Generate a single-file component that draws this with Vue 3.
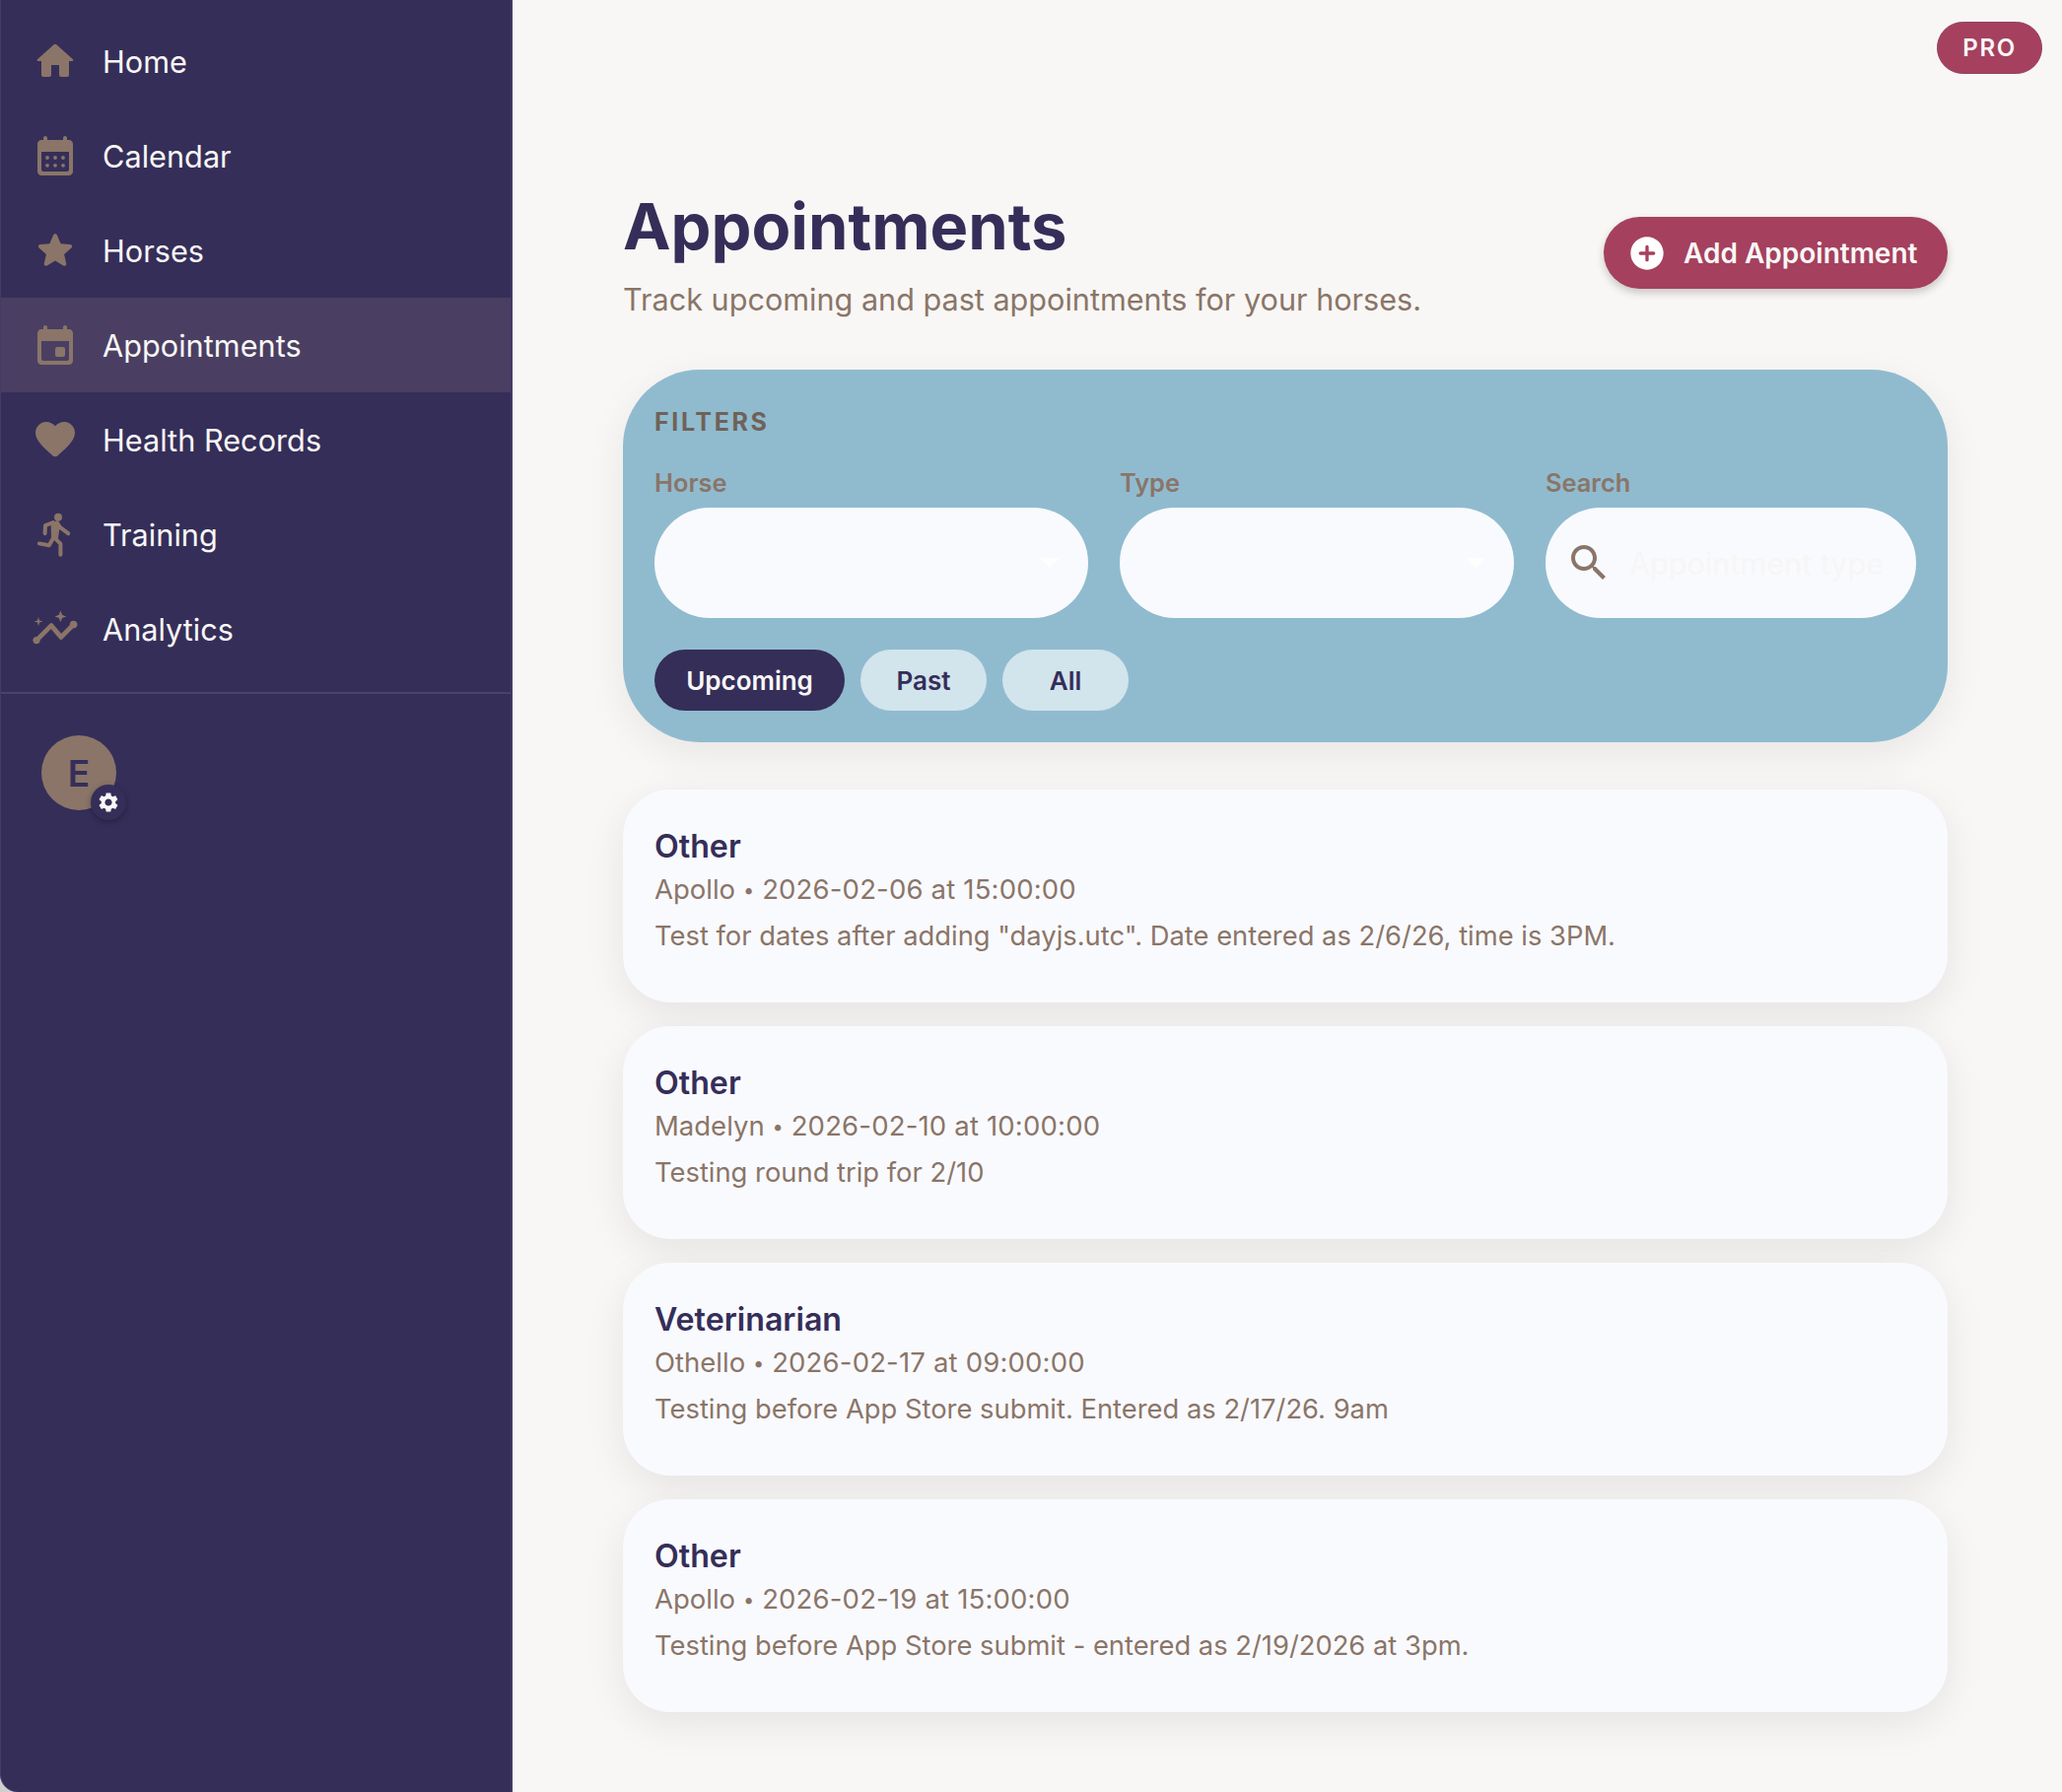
<script setup>
const shell = 'M16 3v1H8V3c0-.55-.45-1-1-1s-1 .45-1 1v1H5c-1.11 0-1.99.9-1.99 2L3 20c0 1.1.89 2 2 2h14c1.1 0 2-.9 2-2V6c0-1.1-.9-2-2-2h-1V3c0-.55-.45-1-1-1s-1 .45-1 1zm2 17H6c-.55 0-1-.45-1-1V10h14v9c0 .55-.45 1-1 1z'
const nav = [
  { label: 'Home', icon: 'home' },
  { label: 'Calendar', icon: 'calendar' },
  { label: 'Horses', icon: 'star' },
  { label: 'Appointments', icon: 'event', active: true },
  { label: 'Health Records', icon: 'heart' },
  { label: 'Training', icon: 'run' },
  { label: 'Analytics', icon: 'graph' }
]
const paths = {
  home: 'M10 19v-5h4v5c0 .55.45 1 1 1h3c.55 0 1-.45 1-1v-7h1.7c.46 0 .68-.57.33-.87L12.67 3.6c-.38-.34-.96-.34-1.34 0l-8.36 7.53c-.34.3-.13.87.33.87H5v7c0 .55.45 1 1 1h3c.55 0 1-.45 1-1z',
  star: 'M12 17.27l4.15 2.51c.76.46 1.69-.22 1.49-1.08l-1.1-4.72 3.67-3.18c.67-.58.31-1.68-.57-1.75l-4.83-.41-1.89-4.46c-.34-.81-1.5-.81-1.84 0L9.19 8.63l-4.83.41c-.88.07-1.24 1.17-.57 1.75l3.67 3.18-1.1 4.72c-.2.86.73 1.54 1.49 1.08l4.15-2.5z',
  heart: 'M13.35 20.13c-.76.69-1.93.69-2.69-.01l-.11-.1C5.3 15.27 1.87 12.16 2 8.28c.06-1.7.93-3.33 2.34-4.29 2.64-1.8 5.9-.96 7.66 1.1 1.76-2.06 5.02-2.91 7.66-1.1 1.41.96 2.28 2.59 2.34 4.29.14 3.88-3.3 6.99-8.55 11.76l-.1.09z'
}
const cards = [
  { title: 'Other', horse: 'Apollo', when: '2026-02-06 at 15:00:00', note: 'Test for dates after adding "dayjs.utc". Date entered as 2/6/26, time is 3PM.' },
  { title: 'Other', horse: 'Madelyn', when: '2026-02-10 at 10:00:00', note: 'Testing round trip for 2/10' },
  { title: 'Veterinarian', horse: 'Othello', when: '2026-02-17 at 09:00:00', note: 'Testing before App Store submit. Entered as 2/17/26. 9am' },
  { title: 'Other', horse: 'Apollo', when: '2026-02-19 at 15:00:00', note: 'Testing before App Store submit - entered as 2/19/2026 at 3pm.' }
]
</script>

<template>
  <div class="app">
    <aside class="sidebar">
      <nav class="nav">
        <a v-for="item in nav" :key="item.label" class="nav-item" :class="{ active: item.active }">
          <svg class="nav-icon" viewBox="0 0 24 24">
            <path v-if="paths[item.icon]" :d="paths[item.icon]" />
            <template v-else-if="item.icon === 'calendar'">
              <path :d="shell" />
              <circle v-for="x in [8, 12, 16]" :key="'a' + x" :cx="x" cy="13" r="0.95" />
              <circle v-for="x in [8, 12, 16]" :key="'b' + x" :cx="x" cy="16.9" r="0.95" />
            </template>
            <template v-else-if="item.icon === 'event'">
              <path :d="shell" />
              <rect x="12" y="13" width="5" height="5" rx="1" />
            </template>
            <template v-else-if="item.icon === 'run'">
              <circle cx="13.5" cy="3.4" r="2" />
              <path d="M10.2 6.4 13 5.7 13.9 8.5 13 14.6 10.4 14.2z" class="run-body" />
              <path class="line thin" d="M6.8 11.6 7 7.6 11 6M13 6.2 14.4 8.4 18.6 11.6M11.2 13.6 8.9 17.6 3.9 16.7M12 14.2 14.7 16.8 14.7 22.4" />
            </template>
            <template v-else>
              <path class="line" d="M2.5 17.8 10 10.3 15 16.2 21.3 9.8" />
              <circle cx="2.5" cy="17.8" r="1.8" />
              <circle cx="21.3" cy="9.8" r="1.9" />
              <path d="M14.7 2.8l.8 2.1 2.1.8-2.1.8-.8 2.1-.8-2.1-2.1-.8 2.1-.8z" />
              <path d="M3.5 6l.5 1.8 1.8.5-1.8.5-.5 1.8-.5-1.8-1.8-.5 1.8-.5z" />
            </template>
          </svg>
          <span>{{ item.label }}</span>
        </a>
      </nav>
      <div class="account">
        <div class="avatar">
          E
          <span class="gear">
            <svg viewBox="0 0 24 24"><path d="M19.14 12.94c.04-.3.06-.61.06-.94 0-.32-.02-.64-.07-.94l2.03-1.58c.18-.14.23-.41.12-.61l-1.92-3.32c-.12-.22-.37-.29-.59-.22l-2.39.96c-.5-.38-1.03-.7-1.62-.94l-.36-2.54c-.04-.24-.24-.41-.48-.41h-3.84c-.24 0-.43.17-.47.41l-.36 2.54c-.59.24-1.13.57-1.62.94l-2.39-.96c-.22-.08-.47 0-.59.22L2.74 8.87c-.12.21-.08.47.12.61l2.03 1.58c-.05.3-.09.63-.09.94s.02.64.07.94l-2.03 1.58c-.18.14-.23.41-.12.61l1.92 3.32c.12.22.37.29.59.22l2.39-.96c.5.38 1.03.7 1.62.94l.36 2.54c.05.24.24.41.48.41h3.84c.24 0 .44-.17.47-.41l.36-2.54c.59-.24 1.13-.56 1.62-.94l2.39.96c.22.08.47 0 .59-.22l1.92-3.32c.12-.22.07-.47-.12-.61l-2.01-1.58zM12 15.6c-1.98 0-3.6-1.62-3.6-3.6s1.62-3.6 3.6-3.6 3.6 1.62 3.6 3.6-1.62 3.6-3.6 3.6z" /></svg>
          </span>
        </div>
      </div>
    </aside>

    <main class="main">
      <span class="pro">PRO</span>
      <header class="head">
        <div>
          <h1>Appointments</h1>
          <p>Track upcoming and past appointments for your horses.</p>
        </div>
        <button class="add">
          <svg viewBox="0 0 24 24"><path d="M12 2C6.48 2 2 6.48 2 12s4.48 10 10 10 10-4.48 10-10S17.52 2 12 2zm4 11h-3v3c0 .55-.45 1-1 1s-1-.45-1-1v-3H8c-.55 0-1-.45-1-1s.45-1 1-1h3V8c0-.55.45-1 1-1s1 .45 1 1v3h3c.55 0 1 .45 1 1s-.45 1-1 1z" /></svg>
          Add Appointment
        </button>
      </header>

      <section class="filters">
        <h2>FILTERS</h2>
        <div class="fields">
          <div class="field">
            <label>Horse</label>
            <div class="control"><i class="caret"></i></div>
          </div>
          <div class="field">
            <label>Type</label>
            <div class="control"><i class="caret"></i></div>
          </div>
          <div class="field">
            <label>Search</label>
            <div class="control search">
              <svg viewBox="0 0 24 24"><path d="M15.5 14h-.79l-.28-.27C15.41 12.59 16 11.11 16 9.5 16 5.91 13.09 3 9.5 3S3 5.91 3 9.5 5.91 16 9.5 16c1.61 0 3.09-.59 4.23-1.57l.27.28v.79l5 4.99L20.49 19l-4.99-5zm-6 0C7.01 14 5 11.99 5 9.5S7.01 5 9.5 5 14 7.01 14 9.5 11.99 14 9.5 14z" /></svg>
              <input placeholder="Appointment type" />
            </div>
          </div>
        </div>
        <div class="pills">
          <button class="pill on">Upcoming</button>
          <button class="pill past">Past</button>
          <button class="pill all">All</button>
        </div>
      </section>

      <article v-for="card in cards" :key="card.when" class="card">
        <h3>{{ card.title }}</h3>
        <div class="meta">{{ card.horse }}<span class="dot">•</span><span class="when">{{ card.when }}</span></div>
        <div class="note">{{ card.note }}</div>
      </article>
    </main>
  </div>
</template>

<style scoped>
.app {
  display: flex;
  min-height: 1818px;
  background: #cfcfd2;
  font-family: Inter, "Liberation Sans", sans-serif;
}
.sidebar {
  width: 520px;
  flex: none;
  box-sizing: border-box;
  background: #352e59;
  border-left: 1px solid #443b68;
  border-right: 2px solid #443b68;
  border-bottom-left-radius: 18px;
  padding-top: 14px;
}
.nav-item {
  display: flex;
  align-items: center;
  height: 96px;
  padding-left: 31px;
  gap: 24px;
  color: #f8f7f5;
  font-size: 30.7px;
}
.nav-item.active {
  background: #4a3f62;
}
.nav-icon {
  width: 48px;
  height: 48px;
  fill: #8a7568;
  flex: none;
}
.line {
  fill: none;
  stroke: #8a7568;
  stroke-width: 2.4;
  stroke-linecap: round;
  stroke-linejoin: round;
}
.line.thin {
  stroke-width: 2;
}
.run-body {
  stroke: #8a7568;
  stroke-width: 0.8;
  stroke-linejoin: round;
}
.account {
  margin-top: 16px;
  border-top: 2px solid #4a416e;
  padding: 42px 0 0 41px;
}
.avatar {
  position: relative;
  width: 76px;
  height: 76px;
  border-radius: 50%;
  background: #8a7568;
  color: #352e59;
  font-size: 37px;
  font-weight: 600;
  line-height: 78px;
  text-align: center;
}
.gear {
  position: absolute;
  right: -10px;
  bottom: -10px;
  width: 36px;
  height: 36px;
  border-radius: 50%;
  background: #352e59;
  box-shadow: 0 2px 6px rgba(0, 0, 0, 0.3);
  display: flex;
  align-items: center;
  justify-content: center;
}
.gear svg {
  width: 24px;
  height: 24px;
  fill: #f8f7f5;
}
.main {
  position: relative;
  flex: 1;
  min-width: 0;
  background: #f8f7f5;
  padding: 191px 116px 0 112px;
}
.pro {
  position: absolute;
  top: 22px;
  right: 20px;
  width: 107px;
  height: 53px;
  box-sizing: border-box;
  border: 1px solid #94406a;
  border-radius: 27px;
  background: #a5405e;
  color: #f8f7f5;
  font-size: 24px;
  font-weight: 600;
  letter-spacing: 1.6px;
  line-height: 51px;
  text-align: center;
}
.head {
  display: flex;
  justify-content: space-between;
  align-items: center;
  margin-bottom: 50px;
}
h1 {
  margin: 0;
  color: #352e59;
  font-size: 65px;
  font-weight: 700;
  line-height: 78px;
}
.head p {
  margin: 14px 0 0;
  color: #8a7568;
  font-size: 30.6px;
  line-height: 42px;
}
.add {
  display: flex;
  align-items: center;
  gap: 17px;
  width: 349px;
  height: 73px;
  padding: 0 0 0 24px;
  margin-bottom: 3px;
  border: 0;
  border-radius: 37px;
  background: #a5405e;
  box-shadow: 0 4px 8px rgba(0, 0, 0, 0.2);
  color: #f8f7f5;
  font: 600 28px Inter, sans-serif;
}
.add svg {
  width: 40px;
  height: 40px;
  fill: #fff;
}
.filters {
  height: 378px;
  box-sizing: border-box;
  padding: 37px 32px 0;
  border-radius: 78px;
  background: #90bbcf;
  box-shadow: 0 12px 40px rgba(0, 0, 0, 0.07);
  margin-bottom: 48px;
}
h2 {
  margin: 0;
  color: #6f6259;
  font-size: 25px;
  font-weight: 700;
  letter-spacing: 2.6px;
  line-height: 32px;
}
.fields {
  display: grid;
  grid-template-columns: 440px 400px 1fr;
  gap: 32px;
  margin-top: 30px;
}
.field {
  min-width: 0;
}
label {
  display: block;
  color: #8a7568;
  font-size: 25.4px;
  font-weight: 600;
  line-height: 32px;
  margin-bottom: 9px;
}
.control {
  position: relative;
  height: 112px;
  border-radius: 56px;
  background: #f9fafe;
}
.caret {
  position: absolute;
  right: 29px;
  top: 51px;
  border-left: 10px solid transparent;
  border-right: 10px solid transparent;
  border-top: 10px solid #fefefd;
}
.search {
  display: flex;
  align-items: center;
  padding-left: 20px;
  gap: 17px;
}
.search svg {
  width: 48px;
  height: 48px;
  fill: #8a7568;
  flex: none;
}
.search input {
  flex: 1;
  width: 100%;
  min-width: 0;
  border: 0;
  outline: 0;
  padding: 0;
  background: transparent;
  font: 400 30.6px Inter, sans-serif;
}
.search input::placeholder {
  color: #f7f6f5;
  opacity: 1;
}
.pills {
  display: flex;
  gap: 16px;
  margin-top: 32px;
}
.pill {
  height: 62px;
  width: 128px;
  padding: 0;
  border: 0;
  border-radius: 31px;
  background: #d2e4ec;
  color: #352e59;
  font: 600 26px Inter, sans-serif;
}
.pill.on {
  width: 193px;
  background: #352e59;
  color: #f8f7f5;
}
.card {
  height: 216px;
  box-sizing: border-box;
  padding: 37px 32px 0;
  border-radius: 48px;
  background: #f9fafe;
  box-shadow: 0 12px 40px rgba(0, 0, 0, 0.08);
  margin-bottom: 24px;
}
h3 {
  margin: 0;
  color: #352e59;
  font-size: 32.2px;
  font-weight: 600;
  line-height: 42px;
}
.meta,
.note {
  color: #8a7568;
  line-height: 38px;
}
.meta {
  height: 38px;
  margin-top: 3px;
  font-size: 27.5px;
}
.dot {
  display: inline-block;
  width: 27px;
  font-size: 20px;
  line-height: 0;
  vertical-align: 2px;
  text-align: center;
}
.when {
  letter-spacing: 0.18px;
}
.note {
  margin-top: 10px;
  font-size: 27.35px;
}
</style>

<style>
html, body { background: #f8f7f5; }
</style>
